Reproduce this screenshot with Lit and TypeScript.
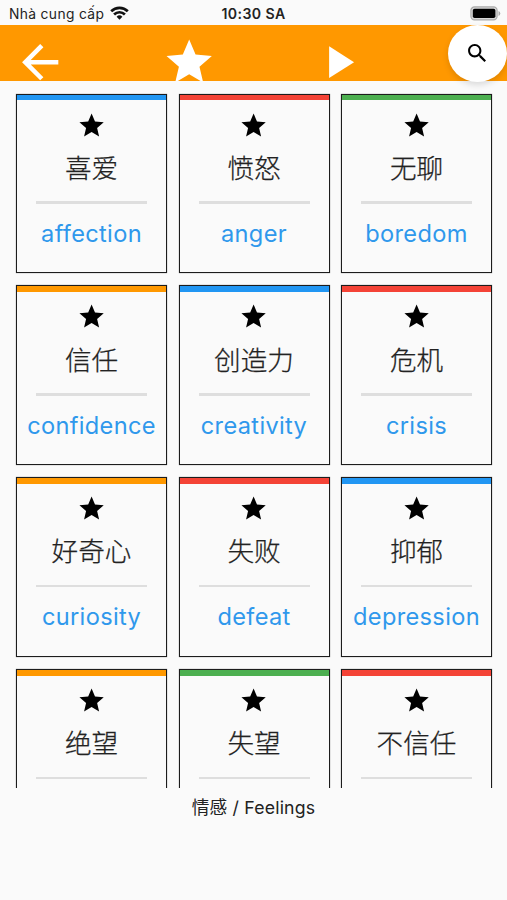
import { LitElement, html, css, svg, nothing } from "lit";
import { customElement, property } from "lit/decorators.js";

const STAR = svg`<path d="M12 17.27L18.18 21l-1.64-7.03L22 9.24l-7.19-.61L12 2 9.19 8.63 2 9.24l5.46 4.73L5.82 21z"/>`;

interface Word { hanzi: string; english?: string; color: string; }

const BLUE = "#2196f3", RED = "#f44336", GREEN = "#4caf50", ORANGE = "#ff9800";

const WORDS: Word[] = [
  { hanzi: "喜爱", english: "affection", color: BLUE },
  { hanzi: "愤怒", english: "anger", color: RED },
  { hanzi: "无聊", english: "boredom", color: GREEN },
  { hanzi: "信任", english: "confidence", color: ORANGE },
  { hanzi: "创造力", english: "creativity", color: BLUE },
  { hanzi: "危机", english: "crisis", color: RED },
  { hanzi: "好奇心", english: "curiosity", color: ORANGE },
  { hanzi: "失败", english: "defeat", color: RED },
  { hanzi: "抑郁", english: "depression", color: BLUE },
  { hanzi: "绝望", color: ORANGE },
  { hanzi: "失望", color: GREEN },
  { hanzi: "不信任", color: RED },
];

@customElement("word-card")
export class WordCard extends LitElement {
  @property({ attribute: false }) word!: Word;

  static styles = css`
    :host {
      display: flex;
      flex-direction: column;
      align-items: center;
      box-sizing: border-box;
      height: 179.4px;
      border: 1px solid #1c1c1c;
      box-shadow: 0 0 1px rgba(0, 0, 0, 0.5);
      min-width: 0;
    }
    .stripe { width: 100%; height: 5.6px; flex: none; }
    .star { width: 29.2px; height: 29.2px; margin-top: 10.4px; flex: none; display: block; }
    .hanzi {
      font: 300 26.6px/36px "Noto Sans CJK SC", sans-serif;
      -webkit-text-stroke: 0.25px #222;
      color: #222;
      margin-top: 9.1px;
      white-space: nowrap;
    }
    .rule { width: 111px; height: 2.4px; background: #dedede; margin-top: 16.5px; flex: none; }
    .english {
      font: 400 23.6px/32px Inter, sans-serif;
      letter-spacing: 0.33px;
      color: #2f98ec;
      margin-top: 14.1px;
      white-space: nowrap;
    }
  `;

  render() {
    const { hanzi, english, color } = this.word;
    return html`
      <div class="stripe" style="background:${color}"></div>
      <svg class="star" viewBox="0 0 24 24">${STAR}</svg>
      <div class="hanzi">${hanzi}</div>
      <div class="rule"></div>
      ${english ? html`<div class="english">${english}</div>` : nothing}
    `;
  }
}

@customElement("app-root")
export class AppRoot extends LitElement {
  static styles = css`
    :host {
      display: flex;
      flex-direction: column;
      position: relative;
      width: 507px;
      height: 900px;
      overflow: hidden;
      background: #fafafa;
      font-family: Inter, "Noto Sans CJK SC", sans-serif;
      color: #222;
    }
    .status {
      display: grid;
      grid-template-columns: 1fr auto 1fr;
      align-items: center;
      height: 25px;
      flex: none;
      box-sizing: border-box;
      padding: 2px 6px 0 9px;
      font-size: 13.8px;
      line-height: 20px;
    }
    .carrier { display: flex; align-items: center; gap: 5.5px; letter-spacing: 0.36px; }
    .wifi { width: 19px; height: 14px; display: block; margin-top: -2px; }
    .time { font-weight: 600; font-size: 14.1px; letter-spacing: 0.42px; margin-right: 3px; }
    .battery { width: 31px; height: 15px; justify-self: end; display: block; margin-top: -1px; }
    .bar {
      display: flex;
      gap: 94.6px;
      height: 56px;
      flex: none;
      box-sizing: border-box;
      padding: 10.3px 0 0 13px;
      overflow: hidden;
      background: #ff9800;
    }
    .action { width: 54.4px; height: 54.4px; flex: none; fill: #fff; display: block; }
    .search {
      position: absolute;
      top: 24.5px;
      right: 0;
      width: 58.8px;
      height: 57px;
      border-radius: 50%;
      background: #fff;
      display: flex;
      align-items: center;
      justify-content: center;
      box-shadow: 0 3px 6px rgba(0, 0, 0, 0.13);
    }
    .search svg { width: 24.6px; height: 24.6px; display: block; }
    .words {
      height: 707.4px;
      flex: none;
      box-sizing: border-box;
      overflow: hidden;
      padding: 12.6px 15px 0 16px;
      display: grid;
      grid-template-columns: repeat(3, 151px);
      column-gap: 11.5px;
      row-gap: 12.4px;
      grid-auto-rows: 179.4px;
    }
    .topic {
      text-align: center;
      font-size: 17.7px;
      line-height: 24px;
      letter-spacing: 0.17px;
      margin-top: 7.6px;
    }
  `;

  render() {
    return html`
      <div class="status">
        <div class="carrier">
          <span>Nhà cung cấp</span>
          <svg class="wifi" viewBox="0 0 19 14" fill="none" stroke="#111" stroke-width="2.7">
            <path d="M1.2 5.2a11.8 11.8 0 0 1 16.6 0"/>
            <path d="M4.1 8.5a7.6 7.6 0 0 1 10.8 0"/>
            <path d="M9.5 13.7L6.6 10.8a4.1 4.1 0 0 1 5.8 0z" fill="#111" stroke="none"/>
          </svg>
        </div>
        <div class="time">10:30 SA</div>
        <svg class="battery" viewBox="0 0 31 15">
          <rect x=".9" y=".9" width="26.2" height="13" rx="3.6" fill="#d8d8d8" stroke="#aaa" stroke-width="1.2"/>
          <rect x="2.8" y="2.7" width="22.6" height="9.4" rx="1.8" fill="#000"/>
          <path d="M28.5 5v5q1.8-.7 1.8-2.5T28.5 5z" fill="#aaa"/>
        </svg>
      </div>
      <div class="bar">
        <svg class="action" viewBox="0 0 24 24"><path d="M20 11H7.83l5.59-5.59L12 4l-8 8 8 8 1.41-1.41L7.83 13H20z"/></svg>
        <svg class="action" viewBox="0 0 24 24">${STAR}</svg>
        <svg class="action" viewBox="0 0 24 24"><path d="M8 5v14l11-7z"/></svg>
      </div>
      <div class="search">
        <svg viewBox="0 0 24 24"><path d="M15.5 14h-.79l-.28-.27C15.41 12.59 16 11.11 16 9.5 16 5.91 13.09 3 9.5 3S3 5.91 3 9.5 5.91 16 9.5 16c1.61 0 3.09-.59 4.23-1.57l.27.28v.79l5 4.99L20.49 19zm-6 0C7.01 14 5 11.99 5 9.5S7.01 5 9.5 5 14 7.01 14 9.5 11.99 14 9.5 14z"/></svg>
      </div>
      <div class="words">
        ${WORDS.map((w) => html`<word-card .word=${w}></word-card>`)}
      </div>
      <div class="topic">情感 / Feelings</div>
    `;
  }
}
